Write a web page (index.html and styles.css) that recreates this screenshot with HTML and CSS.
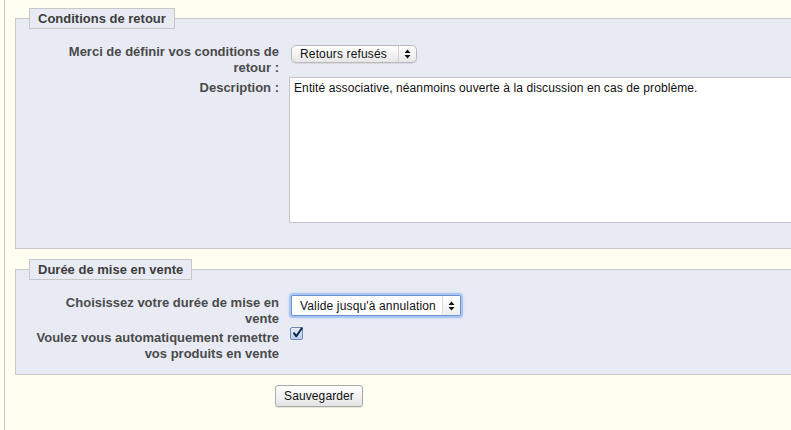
FILE: index.html
```html
<!DOCTYPE html>
<html lang="fr">
<head>
<meta charset="utf-8">
<title>Conditions de retour</title>
<link rel="stylesheet" href="styles.css">
</head>
<body>
<div class="page">
  <form class="form">
    <fieldset class="box box-returns">
      <legend class="box-title">Conditions de retour</legend>
      <div class="row">
        <label class="lbl">Merci de définir vos conditions de<br>retour :</label>
        <div class="field">
          <div class="select select-returns">
            <span class="select-text">Retours refusés</span>
            <span class="select-arrows">
              <svg width="7" height="10" viewBox="0 0 7 10"><path d="M3.5 0.5 L6.5 4 L0.5 4 Z M0.5 6 L6.5 6 L3.5 9.5 Z" fill="#111"/></svg>
            </span>
          </div>
        </div>
      </div>
      <div class="row">
        <label class="lbl lbl-offset">Description :</label>
        <div class="field">
          <div class="textarea">Entité associative, néanmoins ouverte à la discussion en cas de problème.</div>
        </div>
      </div>
    </fieldset>

    <fieldset class="box box-duration">
      <legend class="box-title">Durée de mise en vente</legend>
      <div class="row">
        <label class="lbl">Choisissez votre durée de mise en<br>vente</label>
        <div class="field">
          <div class="select select-duration">
            <span class="select-text">Valide jusqu'à annulation</span>
            <span class="select-arrows">
              <svg width="7" height="10" viewBox="0 0 7 10"><path d="M3.5 0.5 L6.5 4 L0.5 4 Z M0.5 6 L6.5 6 L3.5 9.5 Z" fill="#111"/></svg>
            </span>
          </div>
        </div>
      </div>
      <div class="row">
        <label class="lbl lbl-offset">Voulez vous automatiquement remettre<br>vos produits en vente</label>
        <div class="field">
          <span class="checkbox">
            <svg width="13" height="13" viewBox="0 0 13 13"><path d="M3 6.2 L5.3 9.3 L10.8 1.2" fill="none" stroke="#14244a" stroke-width="2" stroke-linecap="round" stroke-linejoin="round"/></svg>
          </span>
        </div>
      </div>
    </fieldset>

    <div class="actions">
      <button type="button" class="btn">Sauvegarder</button>
    </div>
  </form>
</div>
</body>
</html>
```

FILE: styles.css
```css
html, body {
  margin: 0;
  padding: 0;
  background: #fefff0;
  overflow: hidden;
}

body {
  font-family: "Liberation Sans", Arial, sans-serif;
  color: #111;
}

.page {
  margin-left: 4px;
  border-left: 1px solid #c9c9c9;
  min-height: 430px;
  padding-top: 8px;
  box-sizing: border-box;
  overflow: hidden;
}

.form {
  margin: 0;
}

.box {
  margin: 0 -40px 0 10px;
  border: 1px solid #c8c8c8;
  background: #e8ebf4;
  padding: 15px 0 0 13px;
  min-width: 0;
}

.box-returns {
  padding-bottom: 25px;
}

.box-duration {
  margin-top: 10px;
  padding-bottom: 12px;
}

.box-title {
  padding: 0 8px;
  margin: 0;
  border: 1px solid #c8c8c8;
  background: #e8ebf4;
  font-size: 13px;
  line-height: 19px;
  font-weight: bold;
  color: #3d3d3d;
}

.row {
  display: grid;
  grid-template-columns: 250px 1fr;
  column-gap: 10px;
  align-items: start;
}

.row + .row {
  margin-top: 1px;
}

.box-duration .row + .row {
  margin-top: 0;
}

.lbl {
  text-align: right;
  white-space: nowrap;
  font-size: 13px;
  line-height: 16px;
  font-weight: bold;
  color: #4a4a4a;
}

.lbl-offset {
  padding-top: 3px;
}

.field {
  display: flex;
}

.select {
  display: flex;
  align-items: stretch;
  font-size: 12px;
  color: #111;
  box-sizing: border-box;
}

.select-returns {
  margin: 1px 0 0 2px;
  width: 126px;
  height: 18px;
  border: 1px solid #b9b9b9;
  border-radius: 5px;
  background: linear-gradient(#ffffff, #f3f3f3 50%, #e6e6e6);
  box-shadow: 0 1px 1px rgba(0, 0, 0, 0.08);
}

.select-duration {
  margin: 0 0 0 2px;
  width: 170px;
  height: 21px;
  border: 1px solid #6d94d1;
  border-radius: 2px;
  background: #fff;
  box-shadow: 0 0 0 2px #a9c6f0, 0 0 3px 2px #c4d8f5;
}

.select-text {
  flex: 1;
  display: flex;
  align-items: center;
  padding-left: 8px;
  line-height: 14px;
  white-space: nowrap;
  letter-spacing: 0.15px;
}

.select-arrows {
  width: 17px;
  display: flex;
  align-items: center;
  justify-content: center;
  border-left: 1px solid #d2d2d2;
}

.select-duration .select-arrows {
  border-left-color: #dcdcdc;
  background: linear-gradient(#ffffff, #eeeeee);
}

.textarea {
  width: 560px;
  height: 146px;
  box-sizing: border-box;
  border: 1px solid #c4c4c4;
  background: #fff;
  padding: 3px 4px;
  font-size: 12px;
  line-height: 15px;
  letter-spacing: 0.1px;
  color: #111;
}

.checkbox {
  display: flex;
  align-items: center;
  justify-content: center;
  width: 13px;
  height: 13px;
  margin-left: 1px;
  box-sizing: border-box;
  border: 1px solid #7187b3;
  border-radius: 2px;
  background: linear-gradient(#e6eefb, #b9cdec);
}

.checkbox svg {
  margin: -1px -2px 0 0;
  overflow: visible;
}

.actions {
  margin-top: 10px;
  padding-left: 270px;
}

.btn {
  width: 88px;
  height: 22px;
  padding: 0;
  border: 1px solid #a9a9a9;
  border-radius: 3px;
  background: linear-gradient(#ffffff, #f2f2f2 50%, #e3e3e3);
  box-shadow: 0 1px 1px rgba(0, 0, 0, 0.1);
  font-family: "Liberation Sans", Arial, sans-serif;
  font-size: 12px;
  letter-spacing: 0.1px;
  color: #111;
}
```
